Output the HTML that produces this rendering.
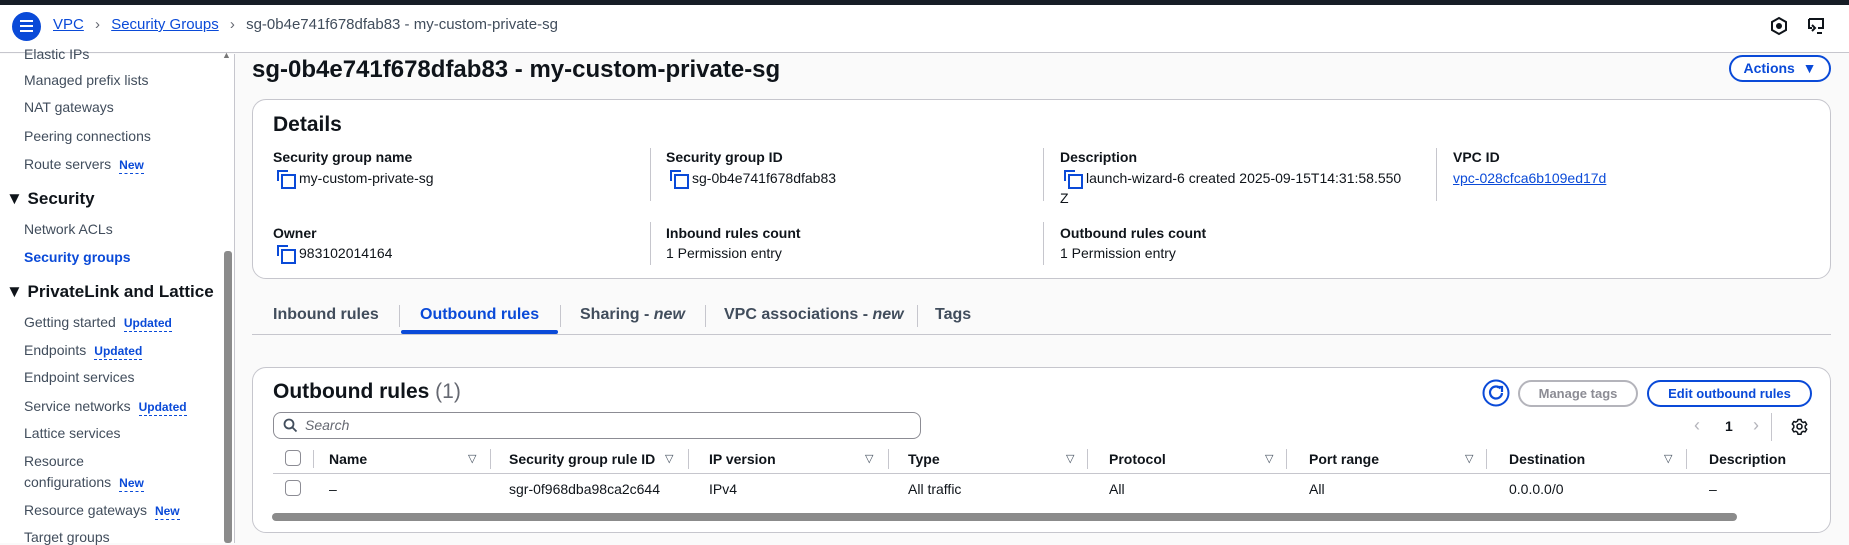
<!DOCTYPE html>
<html><head><meta charset="utf-8"><style>
*{box-sizing:border-box;margin:0;padding:0}
body{width:1849px;height:543px;overflow:hidden;background:#fafafa;font-family:"Liberation Sans",sans-serif;color:#0f141a;font-size:14px;position:relative}
.a{position:absolute;white-space:nowrap}
.blue{color:#0a4ad8}
.b{font-weight:bold}
.lbl{font-weight:bold;font-size:14px}
.sep{position:absolute;width:1px;background:#c6c6cd}
.badge{color:#0a4ad8;font-weight:bold;font-size:12px;border-bottom:1px dashed #0a4ad8;margin-left:8px;padding-bottom:1px}
.copy{display:inline-block;width:15px;height:15px;position:relative;vertical-align:-2px;margin-right:7px}
.copy:before{content:"";position:absolute;left:0;top:0;width:9px;height:9px;border-left:2px solid #0a4ad8;border-top:2px solid #0a4ad8}
.copy:after{content:"";position:absolute;left:4px;top:4px;width:11px;height:11px;border:2px solid #0a4ad8}
.filt{position:absolute;font-size:11px;color:#414d5c}
.cb{position:absolute;width:16px;height:16px;border:1.5px solid #8c8c94;border-radius:4px;background:#fff}
.btn{position:absolute;white-space:nowrap;font-weight:bold;height:27px;border:2px solid #0a4ad8;border-radius:14px;text-align:center;line-height:23px;font-size:14px;color:#0a4ad8;background:#fff}
</style></head><body>
<div class="a" style="left:0;top:0;width:1849px;height:5px;background:#161d26"></div>
<div class="a" style="left:0;top:5px;width:1849px;height:48px;background:#fff;border-bottom:1px solid #c6c6cd"></div>
<div class="a" style="left:12px;top:12px;width:29px;height:29px;border-radius:50%;background:#0a4ad8"></div>
<div class="a" style="left:20px;top:20px;width:13px;height:2px;background:#fff;box-shadow:0 5px 0 #fff,0 10px 0 #fff"></div>
<div class="a" style="left:53px;top:16px;font-size:15px"><span class="blue" style="text-decoration:underline">VPC</span> <span style="color:#656871;margin:0 7px">&#8250;</span> <span class="blue" style="text-decoration:underline">Security Groups</span> <span style="color:#656871;margin:0 7px">&#8250;</span> <span style="color:#414d5c">sg-0b4e741f678dfab83 - my-custom-private-sg</span></div>
<svg class="a" style="left:1770px;top:16px" width="18" height="20" viewBox="0 0 18 20"><path d="M9 2 L16 6 L16 14 L9 18 L2 14 L2 6 Z" fill="none" stroke="#0f141a" stroke-width="2"/><circle cx="9" cy="10" r="3" fill="#0f141a"/></svg>
<svg class="a" style="left:1806px;top:16px" width="20" height="20" viewBox="0 0 20 20"><path d="M3 3 H17 V12 H12 M3 3 V12 H6" fill="none" stroke="#0f141a" stroke-width="2"/><path d="M6 9 L9 12 L6 15 M11 17 H16" fill="none" stroke="#0f141a" stroke-width="2"/></svg>

<!-- sidebar -->
<div class="a" style="left:0;top:54px;width:235px;height:489px;background:#fff;border-right:1px solid #c6c6cd"></div>
<div class="a" style="left:222px;top:50px;font-size:9px;color:#777">&#9650;</div>
<div class="a" style="left:224px;top:251px;width:8px;height:292px;background:#8b8b8b;border-radius:3px"></div>
<div class="a" style="left:24px;top:46px;color:#414d5c">Elastic IPs</div>
<div class="a" style="left:24px;top:72px;color:#414d5c">Managed prefix lists</div>
<div class="a" style="left:24px;top:99px;color:#414d5c">NAT gateways</div>
<div class="a" style="left:24px;top:128px;color:#414d5c">Peering connections</div>
<div class="a" style="left:24px;top:156px;color:#414d5c">Route servers<span class="badge">New</span></div>
<div class="a b" style="left:6px;top:189px;font-size:17px">&#9660;&nbsp;Security</div>
<div class="a" style="left:24px;top:221px;color:#414d5c">Network ACLs</div>
<div class="a b blue" style="left:24px;top:249px">Security groups</div>
<div class="a b" style="left:6px;top:282px;font-size:17px">&#9660;&nbsp;PrivateLink and Lattice</div>
<div class="a" style="left:24px;top:314px;color:#414d5c">Getting started<span class="badge">Updated</span></div>
<div class="a" style="left:24px;top:342px;color:#414d5c">Endpoints<span class="badge">Updated</span></div>
<div class="a" style="left:24px;top:369px;color:#414d5c">Endpoint services</div>
<div class="a" style="left:24px;top:398px;color:#414d5c">Service networks<span class="badge">Updated</span></div>
<div class="a" style="left:24px;top:425px;color:#414d5c">Lattice services</div>
<div class="a" style="left:24px;top:453px;color:#414d5c">Resource</div>
<div class="a" style="left:24px;top:474px;color:#414d5c">configurations<span class="badge">New</span></div>
<div class="a" style="left:24px;top:502px;color:#414d5c">Resource gateways<span class="badge">New</span></div>
<div class="a" style="left:24px;top:529px;color:#414d5c">Target groups</div>

<!-- title -->
<div class="a b" style="left:252px;top:56px;font-size:24px">sg-0b4e741f678dfab83 - my-custom-private-sg</div>
<div class="btn" style="left:1729px;top:55px;width:102px">Actions &nbsp;&#9660;</div>

<!-- details -->
<div class="a" style="left:252px;top:99px;width:1579px;height:180px;background:#fff;border:1px solid #c6c6cd;border-radius:14px"></div>
<div class="a b" style="left:273px;top:113px;font-size:21px">Details</div>
<div class="sep" style="left:650px;top:148px;height:53px"></div>
<div class="sep" style="left:1043px;top:148px;height:53px"></div>
<div class="sep" style="left:1436px;top:148px;height:53px"></div>
<div class="sep" style="left:650px;top:222px;height:43px"></div>
<div class="sep" style="left:1043px;top:222px;height:43px"></div>
<div class="a lbl" style="left:273px;top:149px">Security group name</div>
<div class="a" style="left:277px;top:170px"><span class="copy"></span>my-custom-private-sg</div>
<div class="a lbl" style="left:666px;top:149px">Security group ID</div>
<div class="a" style="left:670px;top:170px"><span class="copy"></span>sg-0b4e741f678dfab83</div>
<div class="a lbl" style="left:1060px;top:149px">Description</div>
<div class="a" style="left:1064px;top:170px"><span class="copy"></span>launch-wizard-6 created 2025-09-15T14:31:58.550</div>
<div class="a" style="left:1060px;top:190px">Z</div>
<div class="a lbl" style="left:1453px;top:149px">VPC ID</div>
<div class="a blue" style="left:1453px;top:170px;text-decoration:underline">vpc-028cfca6b109ed17d</div>
<div class="a lbl" style="left:273px;top:225px">Owner</div>
<div class="a" style="left:277px;top:245px"><span class="copy"></span>983102014164</div>
<div class="a lbl" style="left:666px;top:225px">Inbound rules count</div>
<div class="a" style="left:666px;top:245px">1 Permission entry</div>
<div class="a lbl" style="left:1060px;top:225px">Outbound rules count</div>
<div class="a" style="left:1060px;top:245px">1 Permission entry</div>

<!-- tabs -->
<div class="a b" style="left:273px;top:306px;font-size:16px;color:#414d5c">Inbound rules</div>
<div class="a b blue" style="left:420px;top:306px;font-size:16px">Outbound rules</div>
<div class="a b" style="left:580px;top:306px;font-size:16px;color:#414d5c">Sharing - <i>new</i></div>
<div class="a b" style="left:724px;top:306px;font-size:16px;color:#414d5c">VPC associations - <i>new</i></div>
<div class="a b" style="left:935px;top:306px;font-size:16px;color:#414d5c">Tags</div>
<div class="sep" style="left:399px;top:305px;height:22px"></div>
<div class="sep" style="left:560px;top:305px;height:22px"></div>
<div class="sep" style="left:705px;top:305px;height:22px"></div>
<div class="sep" style="left:917px;top:305px;height:22px"></div>
<div class="a" style="left:252px;top:334px;width:1579px;height:1px;background:#c6c6cd"></div>
<div class="a" style="left:401px;top:330px;width:157px;height:4px;background:#0a4ad8;border-radius:2px"></div>

<!-- outbound card -->
<div class="a" style="left:252px;top:367px;width:1579px;height:166px;background:#fff;border:1px solid #c6c6cd;border-radius:14px"></div>
<div class="a b" style="left:273px;top:380px;font-size:21px">Outbound rules <span style="font-weight:normal;color:#656871">(1)</span></div>
<div class="a" style="left:273px;top:412px;width:648px;height:27px;border:1px solid #8c8c94;border-radius:8px;background:#fff"></div>
<svg class="a" style="left:283px;top:418px" width="15" height="15" viewBox="0 0 15 15"><circle cx="6" cy="6" r="4.5" fill="none" stroke="#414d5c" stroke-width="1.8"/><path d="M9.5 9.5 L13.5 13.5" stroke="#414d5c" stroke-width="1.8"/></svg>
<div class="a" style="left:305px;top:417px;font-style:italic;color:#656871">Search</div>
<svg class="a" style="left:1482px;top:379px" width="28" height="28" viewBox="0 0 28 28"><circle cx="14" cy="14" r="12.5" fill="#fff" stroke="#0a4ad8" stroke-width="2"/><path d="M18.5 9.5 A6 6 0 1 0 20 14" fill="none" stroke="#0a4ad8" stroke-width="2.2"/><path d="M15 8 L20 8 L20 13" fill="none" stroke="#0a4ad8" stroke-width="2.2"/></svg>
<div class="btn" style="left:1518px;top:380px;width:120px;border-color:#b4b4bb;color:#8c8c94;font-size:13px">Manage tags</div>
<div class="btn" style="left:1647px;top:380px;width:165px;font-size:13px">Edit outbound rules</div>
<div class="a" style="left:1694px;top:415px;font-size:18px;color:#b4b4bb">&#8249;</div>
<div class="a b" style="left:1725px;top:418px">1</div>
<div class="a" style="left:1753px;top:415px;font-size:18px;color:#b4b4bb">&#8250;</div>
<div class="sep" style="left:1771px;top:413px;height:28px"></div>
<svg class="a" style="left:1791px;top:418px" width="17" height="17" viewBox="0 0 17 17"><circle cx="8.5" cy="8.5" r="2.5" fill="none" stroke="#0f141a" stroke-width="1.6"/><path d="M7 1.5h3l.5 2 1.7 1 2-.6 1.5 2.6-1.5 1.4v2l1.5 1.4-1.5 2.6-2-.6-1.7 1-.5 2H7l-.5-2-1.7-1-2 .6-1.5-2.6L2.8 9.5v-2L1.3 6.1 2.8 3.5l2 .6 1.7-1z" fill="none" stroke="#0f141a" stroke-width="1.5" stroke-linejoin="round"/></svg>

<div class="cb" style="left:285px;top:450px"></div>
<div class="sep" style="left:313px;top:450px;height:18px"></div>
<div class="a b" style="left:329px;top:451px">Name</div><div class="filt" style="left:468px;top:452px">&#9661;</div>
<div class="sep" style="left:490px;top:449px;height:20px"></div>
<div class="a b" style="left:509px;top:451px">Security group rule ID</div><div class="filt" style="left:665px;top:452px">&#9661;</div>
<div class="sep" style="left:688px;top:449px;height:20px"></div>
<div class="a b" style="left:709px;top:451px">IP version</div><div class="filt" style="left:865px;top:452px">&#9661;</div>
<div class="sep" style="left:888px;top:449px;height:20px"></div>
<div class="a b" style="left:908px;top:451px">Type</div><div class="filt" style="left:1066px;top:452px">&#9661;</div>
<div class="sep" style="left:1087px;top:449px;height:20px"></div>
<div class="a b" style="left:1109px;top:451px">Protocol</div><div class="filt" style="left:1265px;top:452px">&#9661;</div>
<div class="sep" style="left:1286px;top:449px;height:20px"></div>
<div class="a b" style="left:1309px;top:451px">Port range</div><div class="filt" style="left:1465px;top:452px">&#9661;</div>
<div class="sep" style="left:1486px;top:449px;height:20px"></div>
<div class="a b" style="left:1509px;top:451px">Destination</div><div class="filt" style="left:1664px;top:452px">&#9661;</div>
<div class="sep" style="left:1686px;top:449px;height:20px"></div>
<div class="a b" style="left:1709px;top:451px">Description</div>
<div class="a" style="left:273px;top:473px;width:1557px;height:1px;background:#c6c6cd"></div>

<div class="cb" style="left:285px;top:480px"></div>
<div class="a" style="left:329px;top:481px">–</div>
<div class="a" style="left:509px;top:481px">sgr-0f968dba98ca2c644</div>
<div class="a" style="left:709px;top:481px">IPv4</div>
<div class="a" style="left:908px;top:481px">All traffic</div>
<div class="a" style="left:1109px;top:481px">All</div>
<div class="a" style="left:1309px;top:481px">All</div>
<div class="a" style="left:1509px;top:481px">0.0.0.0/0</div>
<div class="a" style="left:1709px;top:481px">–</div>
<div class="a" style="left:272px;top:513px;width:1465px;height:8px;background:#8b8b8b;border-radius:4px"></div>
</body></html>
